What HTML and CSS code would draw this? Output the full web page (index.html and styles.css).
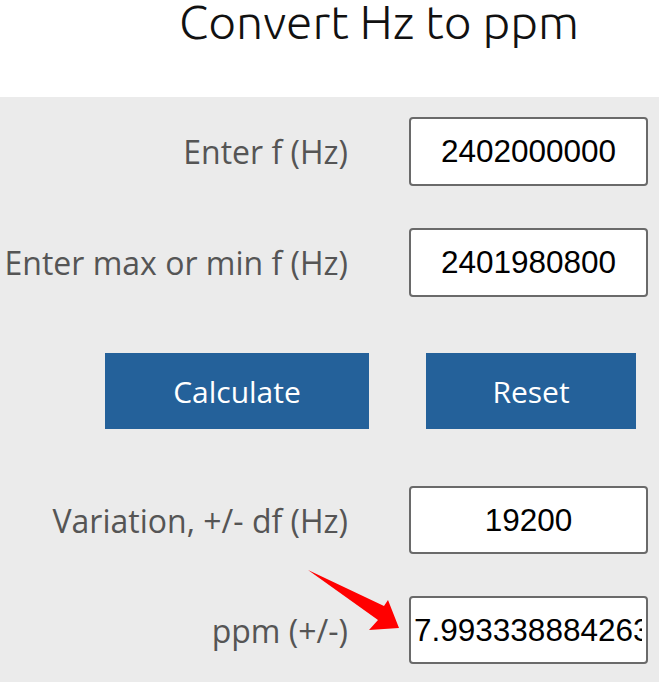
FILE: index.html
```html
<!DOCTYPE html>
<html lang="en">
<head>
<meta charset="utf-8">
<title>Convert Hz to ppm</title>
<link rel="stylesheet" href="styles.css">
</head>
<body>
<header class="page-header">
  <h1 class="title">Convert Hz to ppm</h1>
</header>
<main class="panel">
  <div class="form-grid">
    <label class="field-label" for="f">Enter f (Hz)</label>
    <input class="field-input" id="f" type="text" value="2402000000">
    <label class="field-label" for="fm">Enter max or min f (Hz)</label>
    <input class="field-input" id="fm" type="text" value="2401980800">
  </div>
  <div class="button-row">
    <button class="btn btn-calc" type="button">Calculate</button>
    <button class="btn btn-reset" type="button">Reset</button>
  </div>
  <div class="form-grid results">
    <label class="field-label" for="df">Variation, +/- df (Hz)</label>
    <input class="field-input" id="df" type="text" value="19200">
    <label class="field-label" for="ppm">ppm (+/-)</label>
    <input class="field-input field-overflow" id="ppm" type="text" value="7.993338884263114">
  </div>
  <svg class="arrow" width="100" height="70" viewBox="300 565 100 70" aria-hidden="true">
    <polygon points="308,570 384,606 388,600 399,628 369,630 378,620" fill="#ff0000"/>
  </svg>
</main>
</body>
</html>
```
FILE: styles.css
```css
* { box-sizing: border-box; }
html, body { margin: 0; padding: 0; }
body {
  width: 659px;
  height: 682px;
  overflow: hidden;
  background: #ffffff;
  font-family: "Open Sans", "Noto Sans", sans-serif;
}
.page-header {
  height: 97px;
}
.title {
  margin: 0;
  padding-left: 179px;
  font-family: "Ubuntu", "Open Sans", sans-serif;
  font-weight: 300;
  font-size: 48px;
  line-height: 42px;
  color: #111;
}
.panel {
  position: relative;
  background: #ebebeb;
  height: 585px;
  padding-top: 20px;
}
.form-grid {
  display: grid;
  grid-template-columns: 348px 239px;
  column-gap: 61px;
  row-gap: 42px;
  align-items: center;
}
.field-label {
  text-align: right;
  font-size: 32px;
  color: #555555;
  white-space: nowrap;
}
.field-input {
  width: 239px;
  height: 69px;
  border: 2px solid #6a6a6a;
  border-radius: 4px;
  background: #ffffff;
  font-family: "Liberation Sans", Arial, sans-serif;
  font-size: 31.5px;
  color: #000;
  text-align: center;
  padding: 0 4px;
  outline: none;
}
.field-overflow {
  text-align: left;
  padding-left: 3px;
}
.button-row {
  display: flex;
  gap: 57px;
  padding-left: 105px;
  margin-top: 56px;
}
.btn {
  height: 76px;
  border: none;
  background: #24619a;
  color: #ffffff;
  font-family: "Open Sans", "Noto Sans", sans-serif;
  font-size: 30px;
  padding: 0;
}
.btn-calc { width: 264px; }
.btn-reset { width: 210px; }
.results {
  margin-top: 57px;
  row-gap: 42px;
}
.results .field-input { height: 68px; }
.arrow {
  position: absolute;
  left: 300px;
  top: 468px;
}
```
